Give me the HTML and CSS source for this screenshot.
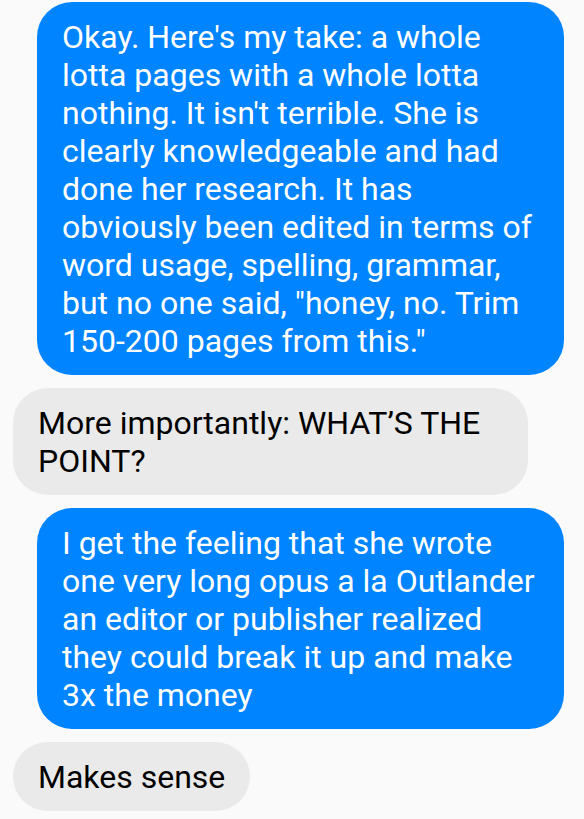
FILE: index.html
```html
<!DOCTYPE html>
<html lang="en">
<head>
    <meta charset="UTF-8" />
    <meta name="viewport" content="width=device-width, initial-scale=1" />
    <title>Conversation</title>
    <link rel="stylesheet" href="styles.css">
</head>
<body>
    <div id="chat-log">
        <div class="bubble sent">Okay. Here's my take: a whole lotta pages with a whole lotta nothing. It isn't terrible. She is clearly knowledgeable and had done her research. It has obviously been edited in terms of word usage, spelling, grammar, but no one said, "honey, no. Trim 150-200 pages from this."</div>
        <div class="bubble received">More importantly: WHAT’S THE POINT?</div>
        <div class="bubble sent">I get the feeling that she wrote one very long opus a la Outlander an editor or publisher realized they could break it up and make 3x the money</div>
        <div class="bubble received">Makes sense</div>
    </div>
</body>
</html>
```

FILE: styles.css
```css
body {
    font-family: Roboto, "Noto Sans", sans-serif;
    margin: 0;
    padding: 0;
    background: #fafafa;
}
#chat-log {
    display: flex;
    flex-direction: column;
    align-items: flex-start;
    gap: 13px;
    padding-top: 2px;
}
.bubble {
    box-sizing: border-box;
    font-size: 32px;
    line-height: 38px;
    padding: 16px 25px 15px;
    border-radius: 35px;
    word-wrap: break-word;
}
.sent {
    background: #0084ff;
    color: white;
    margin-left: 37px;
    max-width: 527px;
}
.received {
    background: #eaeaea;
    color: black;
    margin-left: 13px;
    max-width: 515px;
}
```
